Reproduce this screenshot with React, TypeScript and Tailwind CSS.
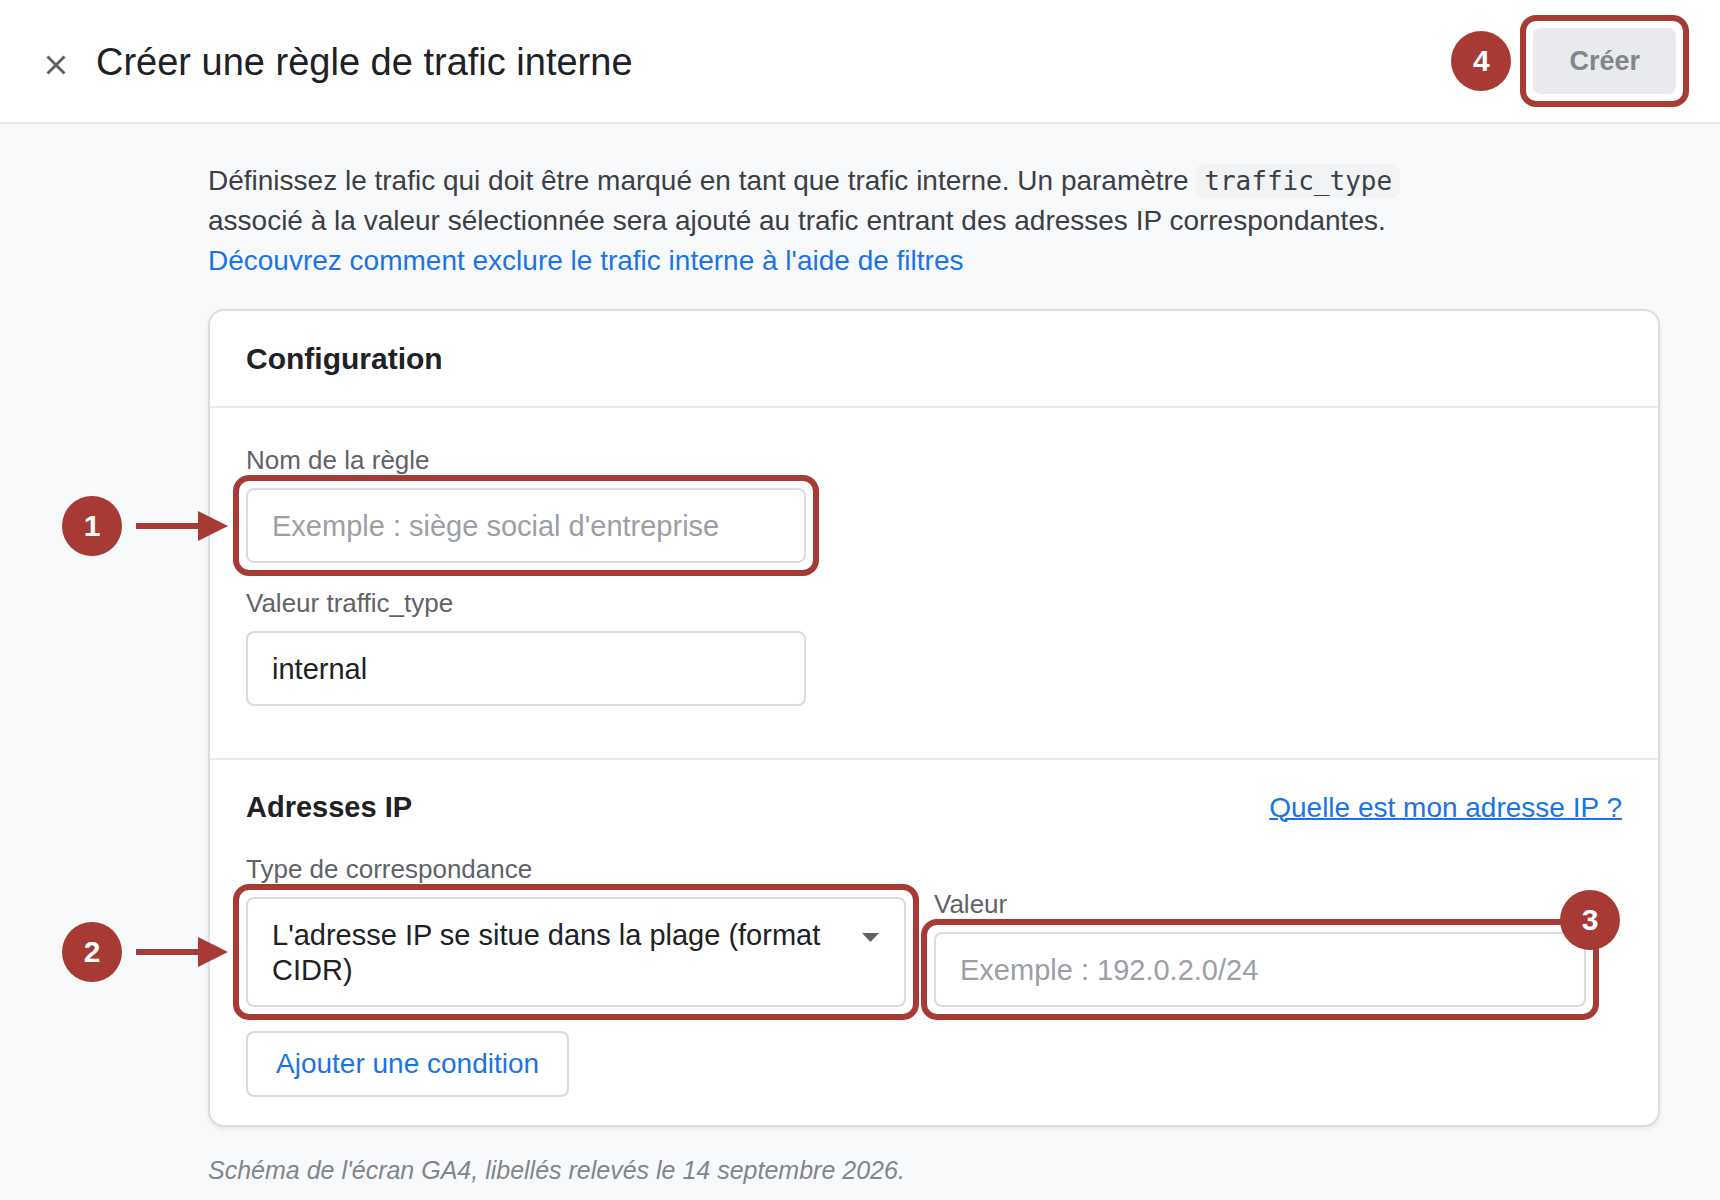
import { useState } from 'react';
import type { ReactNode } from 'react';

const MATCH_TYPES = [
  "L'adresse IP se situe dans la plage (format CIDR)",
  "L'adresse IP est égale à",
  "L'adresse IP commence par",
  "L'adresse IP se termine par",
  "L'adresse IP contient",
];

const labelClass = 'block text-[26px] leading-[30px] text-[#5f6368]';
const inputClass =
  'block h-[75px] w-full rounded-lg border-2 border-[#dadce0] bg-white px-6 pt-[2px] text-[29px] text-[#202124] outline-none placeholder:text-[#9aa0a6]';

function Badge({ children }: { children: ReactNode }) {
  return (
    <span className="flex size-[60px] shrink-0 items-center justify-center rounded-full bg-[#a73a35] text-[30px] leading-none font-bold text-white">
      {children}
    </span>
  );
}

// red frame drawn around a control
function Highlight({ children, className = '' }: { children: ReactNode; className?: string }) {
  return (
    <div className={`relative ${className}`}>
      {children}
      <span className="pointer-events-none absolute -inset-[13px] rounded-2xl border-6 border-[#a73a35]" />
    </div>
  );
}

function StepArrow({ step }: { step: number }) {
  return (
    <div className="pointer-events-none absolute inset-y-0 right-full mr-[18px] flex items-center gap-[14px]">
      <Badge>{step}</Badge>
      <svg width="92" height="30" viewBox="0 0 92 30" fill="#a73a35" aria-hidden="true">
        <path d="M0 12h62V0l30 15-30 15V18H0z" />
      </svg>
    </div>
  );
}

export default function App() {
  const [name, setName] = useState('');
  const [trafficType, setTrafficType] = useState('internal');
  const [matchType, setMatchType] = useState(MATCH_TYPES[0]);
  const [ip, setIp] = useState('');

  return (
    <div className="min-h-screen bg-[#f8f9fb] font-['Liberation_Sans',Arial,sans-serif] text-[#202124]">
      <header className="flex items-center border-b-2 border-[#e8eaed] bg-white py-7 pr-11 pl-[46px]">
        <button type="button" aria-label="Fermer" className="mt-[7px] mr-[30px]">
          <svg width="20" height="20" viewBox="0 0 20 20" fill="none" stroke="#5f6368" strokeWidth="3" aria-hidden="true">
            <path d="M1.5 1.5l17 17M18.5 1.5l-17 17" />
          </svg>
        </button>
        <h1 className="pt-[2px] text-[38px] leading-[44px]">Créer une règle de trafic interne</h1>
        <div className="ml-auto flex items-center gap-[22px]">
          <Badge>4</Badge>
          <Highlight>
            <button
              type="button"
              disabled={!name || !ip}
              className="h-[66px] rounded-lg bg-[#e8eaed] px-9 text-[27px] font-bold text-[#80868b]"
            >
              Créer
            </button>
          </Highlight>
        </div>
      </header>

      <main className="pt-[37px] pr-[60px] pb-4 pl-[208px]">
        <p className="max-w-[1240px] text-[28px] leading-[40px] text-[#3c4043]">
          Définissez le trafic qui doit être marqué en tant que trafic interne. Un paramètre{' '}
          <code className="rounded-lg bg-[#f1f3f4] px-2 py-[2px] font-['DejaVu_Sans_Mono',monospace] text-[26px]">
            traffic_type
          </code>{' '}
          associé à la valeur sélectionnée sera ajouté au trafic entrant des adresses IP correspondantes.{' '}
          <a href="#filtres" className="block text-[#1a73e8]">
            Découvrez comment exclure le trafic interne à l'aide de filtres
          </a>
        </p>

        <form
          onSubmit={e => e.preventDefault()}
          className="mt-7 rounded-2xl border-2 border-[#dadce0] bg-white shadow-[0_2px_4px_rgba(60,64,67,0.1)]"
        >
          <h2 className="border-b-2 border-[#e8eaed] px-9 pt-[30px] pb-[29px] text-[30px] leading-[36px] font-bold">
            Configuration
          </h2>

          <section className="border-b-2 border-[#e8eaed] px-9 pt-[37px] pb-[52px]">
            <label htmlFor="name" className={labelClass}>Nom de la règle</label>
            <Highlight className="mt-[13px] w-[560px]">
              <input
                id="name"
                type="text"
                value={name}
                onChange={e => setName(e.target.value)}
                placeholder="Exemple : siège social d'entreprise"
                className={inputClass}
              />
              <StepArrow step={1} />
            </Highlight>
            <label htmlFor="traffic-type" className={`mt-[25px] ${labelClass}`}>Valeur traffic_type</label>
            <div className="mt-[13px] w-[560px]">
              <input
                id="traffic-type"
                type="text"
                value={trafficType}
                onChange={e => setTrafficType(e.target.value)}
                className={inputClass}
              />
            </div>
          </section>

          <section className="px-9 pt-[29px] pb-7">
            <div className="flex items-baseline justify-between">
              <h3 className="text-[29px] leading-[36px] font-bold">Adresses IP</h3>
              <a href="#adresse-ip" className="text-[28px] leading-[36px] text-[#1a73e8] underline decoration-2">
                Quelle est mon adresse IP ?
              </a>
            </div>

            <div className="mt-7 flex items-end gap-7 pr-9">
              <div className="basis-[660px]">
                <label htmlFor="match-type" className={labelClass}>Type de correspondance</label>
                <Highlight className="mt-[13px]">
                  {/* a native select keeps its value on one line, so the text is laid over it */}
                  <select
                    id="match-type"
                    value={matchType}
                    onChange={e => setMatchType(e.target.value)}
                    className="absolute inset-0 size-full appearance-none rounded-lg border-2 border-[#dadce0] bg-white text-transparent outline-none"
                  >
                    {MATCH_TYPES.map(t => (
                      <option key={t} value={t} className="text-[#202124]">{t}</option>
                    ))}
                  </select>
                  <div className="pointer-events-none relative flex h-[110px] items-start gap-6 pt-[21px] pr-[27px] pl-[26px]" aria-hidden="true">
                    <span className="flex-1 text-[29px] leading-[35px]">{matchType}</span>
                    <svg width="17" height="9" viewBox="0 0 17 9" fill="#5f6368" className="mt-[15px]">
                      <path d="M0 0h17L8.5 9z" />
                    </svg>
                  </div>
                  <StepArrow step={2} />
                </Highlight>
              </div>

              <div className="flex-1">
                <label htmlFor="ip" className={labelClass}>Valeur</label>
                <Highlight className="mt-[13px]">
                  <input
                    id="ip"
                    type="text"
                    value={ip}
                    onChange={e => setIp(e.target.value)}
                    placeholder="Exemple : 192.0.2.0/24"
                    className={inputClass}
                  />
                  <div className="pointer-events-none absolute -top-[42px] -right-[34px] z-10">
                    <Badge>3</Badge>
                  </div>
                </Highlight>
              </div>
            </div>

            <button
              type="button"
              className="mt-6 h-[66px] rounded-lg border-2 border-[#dadce0] px-7 text-[28px] text-[#1a73e8]"
            >
              Ajouter une condition
            </button>
          </section>
        </form>

        <p className="mt-7 text-[25px] leading-[30px] text-[#80868b] italic">
          Schéma de l'écran GA4, libellés relevés le 14 septembre 2026.
        </p>
      </main>
    </div>
  );
}
